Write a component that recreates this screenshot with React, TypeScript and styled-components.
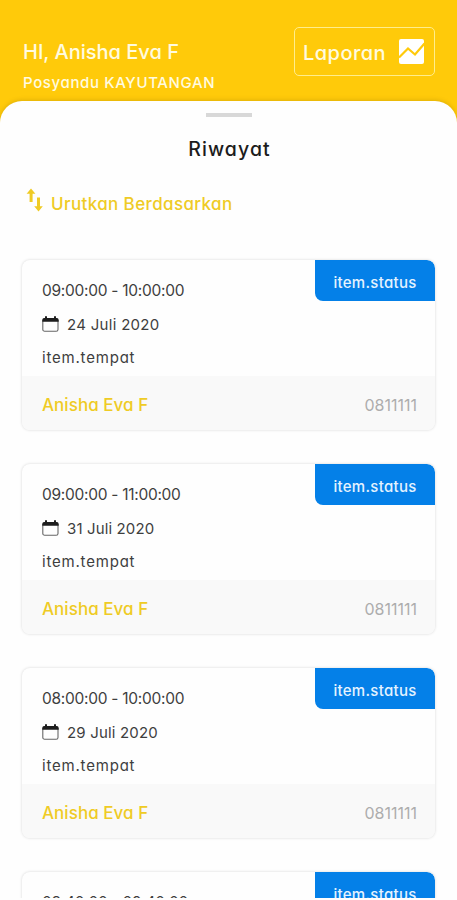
import React from 'react';
import styled, { createGlobalStyle } from 'styled-components';

const GlobalStyle = createGlobalStyle`
  * { box-sizing: border-box; }
  html, body { margin: 0; padding: 0; background: #fefefe; }
  body {
    font-family: Inter, 'Noto Sans', sans-serif;
    font-feature-settings: 'cv11' 1;
  }
`;

const Screen = styled.div`
  display: flex;
  flex-direction: column;
  width: 457px;
  height: 898px;
  margin-bottom: 2px;
  overflow: hidden;
  background: #ffca0a;
`;

const Header = styled.header`
  flex: none;
  display: flex;
  justify-content: space-between;
  align-items: flex-start;
  height: 101px;
  padding: 27px 22px 0 23px;
`;

const Greeting = styled.div`
  display: flex;
  flex-direction: column;
  gap: 6px;
  padding-top: 12px;
  color: #fffbe0;
`;

const Text = styled.div<{ $size: number; $line: number; $spacing?: number; $weight?: number }>`
  font-size: ${(p) => p.$size}px;
  line-height: ${(p) => p.$line}px;
  letter-spacing: ${(p) => p.$spacing ?? 0}px;
  font-weight: ${(p) => p.$weight ?? 500};
  white-space: nowrap;
`;

const ReportButton = styled.button`
  display: flex;
  justify-content: space-between;
  align-items: center;
  width: 141px;
  height: 49px;
  padding: 0 10px 0 8px;
  border: 1.5px solid #ffed8c;
  border-radius: 5px;
  background: transparent;
  color: #fffbe0;
  font: inherit;
  font-feature-settings: inherit;

  > div { padding-top: 3px; }
`;

const Sheet = styled.main`
  flex: 1;
  min-height: 0;
  display: flex;
  flex-direction: column;
  padding: 0 22px;
  border-radius: 22px 22px 0 0;
  background: #fefefe;
  box-shadow: 0 -1px 4px rgba(150, 115, 0, 0.3);
`;

const Handle = styled.div`
  flex: none;
  align-self: center;
  width: 46px;
  height: 4px;
  margin-top: 12px;
  background: #d8d8d8;
`;

const Title = styled.h1`
  margin: 19px 0 0;
  padding-left: 2px;
  text-align: center;
  font-size: 19.5px;
  line-height: 26px;
  font-weight: 500;
  letter-spacing: 1.1px;
  color: #1c1c1c;
`;

const SortRow = styled.div`
  flex: none;
  display: flex;
  align-items: center;
  height: 30px;
  margin-top: 26px;
  padding-left: 4px;
  gap: 7px;
  color: #efcb25;

  svg { margin-top: -6px; }
  > div { padding-top: 1px; }
`;

const List = styled.section`
  display: flex;
  flex-direction: column;
  gap: 34px;
  margin-top: 42px;
`;

const Card = styled.article`
  flex: none;
  display: flex;
  flex-direction: column;
  height: 170px;
  border-radius: 8px;
  overflow: hidden;
  background: #fefefe;
  box-shadow: 0 0 3px rgba(0, 0, 0, 0.16);
`;

const CardBody = styled.div`
  display: flex;
  justify-content: space-between;
  align-items: flex-start;
  height: 116px;
  padding-left: 20px;
  color: #3e3e3e;
`;

const Details = styled.div`
  display: flex;
  flex-direction: column;
  padding-top: 14px;
`;

const DateRow = styled.div`
  display: flex;
  align-items: center;
  gap: 8px;

  svg { margin-top: -2px; }
  > div { padding-top: 1px; }
`;

const Status = styled.div`
  display: flex;
  align-items: center;
  justify-content: center;
  width: 120px;
  height: 41px;
  padding-top: 4px;
  border-radius: 0 8px 0 8px;
  background: #0480e8;
  color: #e4f3ff;
`;

const CardFooter = styled.footer`
  display: flex;
  justify-content: space-between;
  align-items: center;
  flex: 1;
  padding: 3px 18px 0 20px;
  background: #f9f9f9;
`;

const Owner = styled(Text)`
  color: #efcb25;
`;

const Phone = styled(Text)`
  color: #adadad;
`;

const ChartIcon = () => (
  <svg width="25" height="25" viewBox="0 0 25 25">
    <rect width="25" height="25" rx="2" fill="#fff" />
    <path d="M0 18.5 9 9.5 16 15.5 25.5 4.5" fill="none" stroke="#ffca0a" strokeWidth="2.2" />
  </svg>
);

const SortIcon = () => (
  <svg width="18" height="24" viewBox="0 0 18 24" fill="currentColor">
    <path d="M5 .5 9.4 5.8H6.6V14H3.6V5.8H.6Z" />
    <path d="M12.5 23.5 16.8 18.2H14V9.5H11V18.2H8.2Z" />
  </svg>
);

const CalendarIcon = () => (
  <svg width="17" height="16" viewBox="0 0 17 16">
    <rect x=".8" y="2.8" width="15.2" height="12.4" rx="1.8" fill="none" stroke="#666" strokeWidth="1.1" />
    <path d="M.3 5.8V4.2Q.3 2 2.5 2H3V.3H5V2h7V.3h2V2h.5q2.2 0 2.2 2.2v1.6Z" fill="#1d1d1d" />
  </svg>
);

interface Visit {
  time: string;
  spacing: number;
  date: string;
  dateSpacing: number;
}

const visits: Visit[] = [
  { time: '09:00:00 - 10:00:00', spacing: -0.27, date: '24 Juli 2020', dateSpacing: 0.3 },
  { time: '09:00:00 - 11:00:00', spacing: -0.28, date: '31 Juli 2020', dateSpacing: 0.13 },
  { time: '08:00:00 - 10:00:00', spacing: -0.27, date: '29 Juli 2020', dateSpacing: 0.18 },
  { time: '08:40:00 - 09:40:00', spacing: -0.27, date: '30 Juli 2020', dateSpacing: 0.1 },
];

const VisitCard = ({ visit }: { visit: Visit }) => (
  <Card>
    <CardBody>
      <Details>
        <Text $size={15.5} $line={34} $spacing={visit.spacing} $weight={400}>{visit.time}</Text>
        <DateRow>
          <CalendarIcon />
          <Text $size={15} $line={32} $spacing={visit.dateSpacing} $weight={400}>{visit.date}</Text>
        </DateRow>
        <Text $size={15} $line={33} $spacing={0.8} $weight={400}>item.tempat</Text>
      </Details>
      <Status>
        <Text $size={15} $line={20} $spacing={0.3}>item.status</Text>
      </Status>
    </CardBody>
    <CardFooter>
      <Owner $size={17} $line={22} $spacing={0.04}>Anisha Eva F</Owner>
      <Phone $size={16} $line={22} $spacing={0} $weight={400}>0811111</Phone>
    </CardFooter>
  </Card>
);

export default function App() {
  return (
    <>
      <GlobalStyle />
      <Screen>
        <Header>
          <Greeting>
            <Text $size={20} $line={27} $spacing={0}>HI, Anisha Eva F</Text>
            <Text $size={15} $line={22} $spacing={0.63}>Posyandu KAYUTANGAN</Text>
          </Greeting>
          <ReportButton>
            <Text $size={20} $line={26} $spacing={0.45}>Laporan</Text>
            <ChartIcon />
          </ReportButton>
        </Header>
        <Sheet>
          <Handle />
          <Title>Riwayat</Title>
          <SortRow>
            <SortIcon />
            <Text $size={17} $line={24} $spacing={0.38}>Urutkan Berdasarkan</Text>
          </SortRow>
          <List>
            {visits.map((visit) => (
              <VisitCard key={visit.date} visit={visit} />
            ))}
          </List>
        </Sheet>
      </Screen>
    </>
  );
}
